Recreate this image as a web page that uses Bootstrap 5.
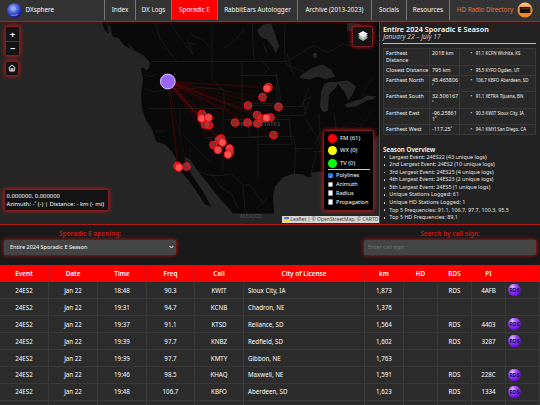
<!DOCTYPE html>
<html lang="en" data-bs-theme="dark">

<head>
    <meta charset="UTF-8" />
    <title>DXsphere - Sporadic E</title>
    <meta name="viewport" content="width=device-width, initial-scale=1" />
    <link href="https://cdn.jsdelivr.net/npm/bootstrap@5.3.3/dist/css/bootstrap.min.css" rel="stylesheet" />
    <style>
        body {
            font-family: "Noto Sans", "Open Sans", sans-serif;
            font-size: 6px;
            line-height: 1.2;
            color: #fff;
            background: #191919;
            overflow: hidden;
            height: 405px;
        }

        /* top bar */
        .topbar {
            height: 21.5px;
            padding: 0;
            flex-wrap: nowrap;
            background: #333;
            border-bottom: 1.5px solid #c8191b;
            font-size: 6.3px;
            box-shadow: 0 0 3px #700;
            position: relative;
            z-index: 2;
        }

        .topbar .nav-link {
            display: flex;
            align-items: center;
            justify-content: center;
            height: 20px;
            padding: 0;
            color: #f5f5f5;
            border-left: 1px solid #777;
            white-space: nowrap;
        }

        .topbar .nav-link.active { background: #f00; color: #fff; }
        .topbar .nav-link.hdradio { color: #e27745; }
        .brandname { margin-left: 4px; }
        .globe { margin-left: -1.5px; }
        .w-index { width: 31px; }
        .w-logs { width: 36px; }
        .w-spor { width: 46px; }
        .w-rabbit { width: 80px; }
        .w-arch { width: 74px; }
        .w-social { width: 35px; }
        .w-res { width: 43px; }
        .w-hd { width: 91px; }

        /* map */
        .mapbox {
            width: 379px;
            height: 202px;
            background: #262626;
        }

        .mapbox > svg { display: block; }

        .glow {
            position: absolute;
            background: #141414;
            border: 1px solid #7d1c1e;
            border-radius: 2px;
            box-shadow: 0 0 4px #d8161a;
        }

        .zoombox { left: 5px; top: 4.5px; width: 15px; height: 29.5px; }
        .zoombox > span, .homebox {
            display: flex;
            align-items: center;
            justify-content: center;
            font-size: 9px;
            font-weight: 700;
            line-height: 1;
        }
        .zoombox > span { height: 14px; }
        .zoombox > span + span { border-top: 1px solid #8d1c1e; }
        .homebox { left: 4.5px; top: 39.5px; width: 14.5px; height: 14.5px; }
        .layerbox {
            left: 352px;
            top: 4.5px;
            width: 21px;
            height: 20.5px;
            border-radius: 3px;
            display: flex;
            align-items: center;
            justify-content: center;
        }
        .coords {
            left: 4px;
            top: 167px;
            width: 105px;
            height: 22px;
            padding: 2px 1.5px;
            line-height: 8.7px;
            font-size: 5.9px;
            white-space: nowrap;
        }
        .legend {
            left: 323px;
            top: 108px;
            width: 51px;
            height: 81px;
            padding: 2px 3.5px;
            border-radius: 3px;
            background: #000;
            font-size: 5.6px;
        }
        .legend .kind { height: 12.3px; gap: 3.5px; font-size: 5.9px; }
        .legend i { width: 9px; height: 9px; border-radius: 50%; }
        .fm { background: #f00; }
        .wx { background: #ff0; }
        .tv { background: #0f0; }
        .legend hr { margin: 0 0 .6px; border-color: #ccc; opacity: 1; width: 42px; }
        .legend .opt { height: 8.85px; gap: 3px; }
        .boxy {
            width: 5.5px;
            height: 5.5px;
            background: #fff;
            border: .5px solid #999;
            border-radius: 1px;
            display: flex;
        }
        .boxy.on { background: #1976e8; border-color: #1976e8; }
        .attrib {
            position: absolute;
            right: 0;
            bottom: 1px;
            height: 7px;
            width: 97px;
            padding-left: 2px;
            background: #d5d5d5;
            color: #444;
            font-size: 5px;
            line-height: 7px;
            white-space: nowrap;
        }
        .attrib a { color: #0078a8; text-decoration: none; }

        /* season panel */
        .season {
            width: 161px;
            height: 202px;
            padding: 3.5px 4px 0 3px;
            background: #222;
            border-left: 1.5px solid #d01518;
            overflow: hidden;
        }
        .season h1 { font-size: 7.2px; line-height: 8px; margin: 0; font-weight: 600; letter-spacing: .07px; }
        .season .dates {
            font-size: 6.6px;
            line-height: 7px;
            font-style: italic;
            color: #ccc;
            height: 10.5px;
            border-bottom: 1px solid #bbb;
            width: 153px;
        }
        .facts {
            width: 153px;
            margin-top: 4.5px;
            table-layout: fixed;
            border-collapse: collapse;
            font-size: 5.4px;
            line-height: 6.5px;
            background: #292929;
            color: #f2f2f2;
        }
        .facts td { border: 1px solid #383838; padding: 1px 2px 0; vertical-align: top; white-space: nowrap; }
        .facts td:first-child { letter-spacing: .06px; }
        .facts td:last-child { font-size: 4.4px; padding-left: 10.5px; }
        .facts .dot { margin-right: 3.5px; }
        .facts .tall { height: 16.5px; }
        .facts .short { height: 10px; }
        .season h2 { font-size: 6.3px; line-height: 7.5px; margin: 11px 0 0; font-weight: 600; }
        .season ul { padding: 0; margin: 0; font-size: 5.4px; line-height: 7.58px; color: #e2e2e2; white-space: nowrap; list-style: none; }
        .season li { display: flex; align-items: center; gap: 4px; }
        .season li::before { content: ""; width: 1.8px; height: 1.8px; margin-left: .5px; border-radius: 50%; background: #e2e2e2; }

        /* filter bar */
        .filters {
            height: 41.5px;
            border-top: 1.5px solid #b3181b;
            background: #191919;
            padding: 5.5px 4px 0;
            position: relative;
        }
        .filters > div { width: 172px; }
        .filters label { display: block; height: 9.5px; line-height: 8px; font-size: 6.5px; color: #d01416; font-weight: 600; text-align: center; }
        .field {
            height: 15px;
            padding: 0 6px;
            font-size: 5.5px;
            color: #fff;
            background: #444;
            border-radius: 1px;
            box-shadow: 0 0 4px #e01518;
            display: flex;
            align-items: center;
            justify-content: space-between;
        }
        .field svg { margin-right: -4px; }
        .field.hint { color: #777; padding-left: 4px; }

        /* log table */
        .logs { width: 540px; table-layout: fixed; border-collapse: collapse; background: #2c2c2c; font-size: 6.2px; }
        .logs th { background: #f00; height: 17px; padding: 0; text-align: center; font-weight: 600; font-size: 6.4px; border-right: 1px solid #d71212; }
        .logs td { height: 16.95px; padding: 0; text-align: center; border: solid #393939; border-width: 0 1px 1px 0; }
        .logs td:nth-child(6) { text-align: left; padding-left: 4px; }
        .logs td:last-child { text-align: left; padding-left: 2px; }
        .logs svg { display: block; }
        .c-event { width: 48.5px; }
        .c-wide { width: 49px; }
        .c-freq { width: 48px; }
        .c-city { width: 121px; }
        .c-km { width: 39px; }
        .c-slim { width: 34px; }
    </style>
</head>

<body>
    <nav class="topbar navbar">
        <div class="d-flex align-items-center ps-2 flex-grow-1">
            <svg class="globe" width="15" height="15" viewBox="0 0 15 15">
                <defs>
                    <radialGradient id="globe" cx=".4" cy=".35" r=".65">
                        <stop offset="0" stop-color="#b5c2f4" />
                        <stop offset=".45" stop-color="#5269dc" />
                        <stop offset="1" stop-color="#1212a0" />
                    </radialGradient>
                </defs>
                <circle cx="7.5" cy="7.5" r="7.3" fill="url(#globe)" />
                <path d="M5.500 4h3v3H6zM4 12q3.500 1.500 7-.5" fill="none" stroke="#99a9ed" stroke-width=".7" />
            </svg>
            <span class="brandname">DXsphere</span>
        </div>
        <a class="nav-link w-index">Index</a>
        <a class="nav-link w-logs">DX Logs</a>
        <a class="nav-link w-spor active">Sporadic E</a>
        <a class="nav-link w-rabbit">RabbitEars Autologger</a>
        <a class="nav-link w-arch">Archive (2013-2023)</a>
        <a class="nav-link w-social">Socials</a>
        <a class="nav-link w-res">Resources</a>
        <a class="nav-link w-hd hdradio">HD Radio Directory
            <svg class="ms-1" width="16" height="16" viewBox="0 0 16 16">
                <defs>
                    <linearGradient id="orange" x2="0" y2="1">
                        <stop offset="0" stop-color="#ffd6a0" />
                        <stop offset=".4" stop-color="#ed852c" />
                        <stop offset="1" stop-color="#f58a20" />
                    </linearGradient>
                </defs>
                <circle cx="8" cy="8" r="7.600" fill="url(#orange)" />
                <rect x="2.800" y="5" width="10.500" height="6" rx=".6" fill="#171210" />
                <path d="M4 6.500h8" stroke="#6b3d1a" stroke-width=".6" />
            </svg>
        </a>
    </nav>

    <div class="d-flex">
        <div class="mapbox position-relative overflow-hidden">
            <svg width="379" height="202" viewBox="0 21.500 379 202">
                <!-- land -->
                <path fill="#090909" d="M102 21l2 7 4 5 2-3 3 6 6 2 4 6 5 3 6 3 5 4 6 3 5 5-1 6-3 2-3-3-2 1 2 10-2 16 1 14 4 12 6 9 4 12 9 3 7 7 4 7 3 11 9 10 10 14 7 11 6 2-8-15-9-13-8-13-1-9 6 4 7 11 10 12 10 13 12 13 3 4H274l-1-17 2-10 8-9 10-4 10 1 5 3 4-1-1-4 9-1 8 3 10 0 8 12 10 14 8 2 0-20-4-18 12-22 12-14V21z" />
                <!-- water on land -->
                <g fill="#262626">
                    <path d="M299 76l12-8 11-4 9 5 4 7-9 3-8-3-9 3-7-1zM324 84l6-3 9 1-3 5-7 7-1 16-5 2-3-6 1-14zM337 81l11-1 8 6-4 9-4 5-3-8-5-6zM345 104l10-4 11-2 1 2-11 6-9 1zM362 98l5-3 9 1-3 3-9 1z" />
                    <path d="M257 30l6-6 8-1 4 10 4 13-3 7-3-6-6-8-6-2zM263 42l3 7 2 4-3-3zM314 52l3 1 0 4-3 1-1-4zM347 22l12 1 5 6-3 9-5-6-9-2zM370 30l5 2-3 3z" />
                    <path d="M107 21l4 6 1 8-4-4zM128 42l7 8 9 5 6 7-9-3-9-7z" opacity=".8" />
                </g>
                <g fill="none" stroke="#202020" stroke-width=".7">
                    <path d="M151 61H285l3 4 18 7 15-4M148 108H223V119H249M180 108v23l31 31M212 61v17l8 9 4 3v18M187 90l10-3 27 2M242 61v44M204 137h54M223 119v52M258 115v62M189 171h9l13 4h11l9-2 12 12 7-1 9 13 5 7" />
                    <path d="M155 21l5 17 9 13 8 10M170 22l9 14 14 18-5-12 8 2M212 22v39M252 21l2 40M284 21l1 40 12-6 17-10 14 7 14-8 16 2 22-12M223 48l12-8 9-11M190 33l12 6 9 9" />
                    <path d="M241 75h36v28h-35M276 73l5 25-3 8h24l7-19M242 105h30l7 10h25l5-14M258 119h31l3 25h-34M249 119v17h44l3 12-2 29M293 148h24l3-7-8-12-7-11M306 114l-3-13 8-5M319 113l1 20-5 11M334 112l3 25M313 151h48l10-10M317 151l-5 18-3 10M331 149v28" />
                    <path d="M144 88l9 3 9-1 8-2h10M144 74l7 2 6-3M261 59l8 9-6 7M287 53l4 14 4 8M212 173l8 13 12 8 6 15M243 186l2 25 13 8M268 197l-12 11" />
                    <path d="M373 78l-7 8-5 11M371 110l-8 15-14-3-8 7M155 130l10 1M173 122v11M190 166v-19" opacity=".7" />
                </g>
                <g fill="#4c4c4c" font-family="Noto Sans, sans-serif" font-size="5.500" font-weight="600">
                    <text x="236" y="125.500" textLength="44">UNITED STATES</text>
                    <text x="240" y="217" textLength="22">MEXICO</text>
                </g>
                <g id="lines" stroke="#d90000" stroke-width=".6" stroke-opacity=".25"></g>
                <g id="pins"></g>
                <circle cx="167.800" cy="81" r="7.400" fill="#9b66fb" stroke="#dcc8ff" stroke-width="1" />
            </svg>

            <div class="glow zoombox"><span>+</span><span>−</span></div>
            <div class="glow homebox">
                <svg width="8" height="8" viewBox="0 0 8 8" fill="none" stroke="#fff" stroke-width=".9">
                    <path d="M.7 4L4 1l3.300 3M1.700 3.500V7h4.600V3.500M3.200 7V4.700h1.600V7" />
                </svg>
            </div>
            <div class="glow layerbox">
                <svg width="12" height="12" viewBox="0 0 12 12">
                    <path d="M6 5.500l5 2.300L6 11 1 7.800z" fill="#aaa" />
                    <path d="M6 3.500l5 2.300L6 9 1 5.800z" fill="#c7c7c7" />
                    <path d="M6 1l5 2.800L6 7 1 3.800z" fill="#f1f1f1" />
                </svg>
            </div>
            <div class="glow coords">0.000000, 0.000000<br>Azimuth: -˚ (-) | Distance: - km (- mi)</div>
            <div class="glow legend">
                <div class="kind d-flex align-items-center"><i class="fm"></i>FM (61)</div>
                <div class="kind d-flex align-items-center"><i class="wx"></i>WX (0)</div>
                <div class="kind d-flex align-items-center"><i class="tv"></i>TV (0)</div>
                <hr>
                <div class="opt d-flex align-items-center"><span class="boxy on"><svg width="5" height="5" viewBox="0 0 5 5"><path d="M1 2.500l1 1L4 1" fill="none" stroke="#fff" stroke-width=".9" /></svg></span>Polylines</div>
                <div class="opt d-flex align-items-center"><span class="boxy"></span>Azimuth</div>
                <div class="opt d-flex align-items-center"><span class="boxy"></span>Radius</div>
                <div class="opt d-flex align-items-center"><span class="boxy"></span>Propagation</div>
            </div>
            <div class="attrib">
                <svg width="5" height="4" viewBox="0 0 5 4"><path fill="#4c7be1" d="M0 0h5v2H0z" /><path fill="#ffd500" d="M0 2h5v2H0z" /></svg>
                <a>Leaflet</a> | © <a>OpenStreetMap</a>, © <a>CARTO</a>
            </div>
        </div>

        <div class="season">
            <h1>Entire 2024 Sporadic E Season</h1>
            <div class="dates">January 22 – July 17</div>
            <table class="facts">
                <colgroup><col style="width:46px"><col style="width:30px"><col></colgroup>
                <tbody>
                    <tr class="tall"><td>Farthest<br>Distance</td><td>2018 km</td><td><span class="dot">•</span>91.1 KCFN Wichita, KS</td></tr>
                    <tr class="short"><td>Closest Distance</td><td>795 km</td><td><span class="dot">•</span>95.5 KYFO Ogden, UT</td></tr>
                    <tr class="tall"><td>Farthest North</td><td>45.465806<br>˚</td><td><span class="dot">•</span>106.7 KBFO Aberdeen, SD</td></tr>
                    <tr class="tall"><td>Farthest South</td><td>32.506167<br>˚</td><td><span class="dot">•</span>91.1 XETRA Tijuana, BN</td></tr>
                    <tr class="tall"><td>Farthest East</td><td>-96.25861<br>1˚</td><td><span class="dot">•</span>90.3 KWIT Sioux City, IA</td></tr>
                    <tr class="short"><td>Farthest West</td><td>-117.25˚</td><td><span class="dot">•</span>94.1 KMYI San Diego, CA</td></tr>
                </tbody>
            </table>
            <h2>Season Overview</h2>
            <ul>
                <li>Largest Event: 24ES22 (43 unique logs)</li>
                <li>2nd Largest Event: 24ES2 (10 unique logs)</li>
                <li>3rd Largest Event: 24ES25 (4 unique logs)</li>
                <li>4th Largest Event: 24ES23 (2 unique logs)</li>
                <li>5th Largest Event: 24ES5 (1 unique logs)</li>
                <li>Unique Stations Logged: 61</li>
                <li>Unique HD Stations Logged: 1</li>
                <li>Top 5 Frequencies: 91.1, 106.7, 97.7, 100.3, 95.5</li>
                <li>Top 5 HD Frequencies: 89.1</li>
            </ul>
        </div>
    </div>

    <div class="filters d-flex justify-content-between">
        <div>
            <label>Sporadic E opening:</label>
            <div class="field">Entire 2024 Sporadic E Season
                <svg width="5" height="4" viewBox="0 0 5 4"><path d="M.6 1l1.900 2L4.400 1" fill="none" stroke="#fff" /></svg>
            </div>
        </div>
        <div>
            <label>Search by call sign:</label>
            <div class="field hint">Enter call sign</div>
        </div>
    </div>

    <table class="logs">
        <colgroup>
            <col class="c-event"><col class="c-wide"><col class="c-wide"><col class="c-freq"><col class="c-wide"><col class="c-city">
            <col class="c-km"><col class="c-slim"><col class="c-slim"><col class="c-slim"><col>
        </colgroup>
        <thead>
            <tr><th>Event</th><th>Date</th><th>Time</th><th>Freq</th><th>Call</th><th>City of License</th><th>km</th><th>HD</th><th>RDS</th><th>PI</th><th></th></tr>
        </thead>
        <tbody id="logRows"></tbody>
    </table>

    <svg width="0" height="0" class="position-absolute">
        <defs>
            <radialGradient id="violet" cx=".35" cy=".25" r=".8">
                <stop offset="0" stop-color="#e5c4ff" />
                <stop offset=".4" stop-color="#9a46f5" />
                <stop offset="1" stop-color="#5a08cf" />
            </radialGradient>
        </defs>
    </svg>

    <script src="https://cdn.jsdelivr.net/npm/bootstrap@5.3.3/dist/js/bootstrap.bundle.min.js"></script>
    <script>
        const logs = [
            ['18:48', '90.3', 'KWIT', 'Sioux City, IA', '1,873', '4AFB'],
            ['19:31', '94.7', 'KCNB', 'Chadron, NE', '1,376', ''],
            ['19:37', '91.1', 'KTSD', 'Reliance, SD', '1,564', '4403'],
            ['19:39', '97.7', 'KNBZ', 'Redfield, SD', '1,602', '3287'],
            ['19:39', '97.7', 'KMTY', 'Gibbon, NE', '1,763', ''],
            ['19:46', '98.5', 'KHAQ', 'Maxwell, NE', '1,591', '228C'],
            ['19:48', '106.7', 'KBFO', 'Aberdeen, SD', '1,623', '1334'],
            ['', '', '', '', '', '']
        ];
        const rdsIcon = `<svg width="13" height="13" viewBox="0 0 13 13">
            <circle cx="6.500" cy="6" r="6.300" fill="url(#violet)" />
            <text x="6.500" y="8.200" text-anchor="middle" font-size="5.200" font-weight="700" fill="#21063f">RDS</text></svg>`;

        document.getElementById('logRows').innerHTML = logs.map(([time, freq, call, city, km, pi]) => `
            <tr><td>${call ? '24ES2' : ''}</td><td>${call ? 'Jan 22' : ''}</td><td>${time}</td><td>${freq}</td><td>${call}</td>
            <td>${city}</td><td>${km}</td><td></td><td>${pi ? 'RDS' : ''}</td><td>${pi}</td><td>${pi ? rdsIcon : ''}</td></tr>`).join('');

        // station markers, last value is how bright the fill is
        const stations = [
            [268.5, 86.5, .6], [267, 88, .8], [262.5, 96.5, .6], [248, 105, .6], [278.5, 106.3, .6],
            [257, 114.5, .6], [261.5, 118, .6], [270.5, 117, .6], [266.5, 117.5, .9], [235, 122, .6],
            [247.5, 122, .6], [257.5, 123, .6], [273.5, 134.5, .6],
            [202, 113.5, .6], [205, 124, .6], [209, 124.5, .6], [201.5, 118, .9], [208.5, 117, .8],
            [213.5, 144.5, .6], [221, 138, .6], [219, 139.5, .6], [218, 149.5, .8], [222.5, 142, .9],
            [229.5, 148, .8], [230, 151, .7], [228, 154, .9],
            [177.5, 165.5, .6], [178.8, 167, .9], [186.5, 166, .6]
        ];
        document.getElementById('lines').innerHTML = stations
            .map(([x, y]) => `<path d="M168 81L${x} ${y}" />`).join('');
        document.getElementById('pins').innerHTML = stations
            .map(([x, y, a]) => `<circle cx="${x}" cy="${y}" r="3.7" fill="${a > .7 ? '#ff5457' : '#c2383b'}" stroke="#fb1114" stroke-width="1.1" fill-opacity="${a + .1}" />`).join('');
    </script>
</body>

</html>
